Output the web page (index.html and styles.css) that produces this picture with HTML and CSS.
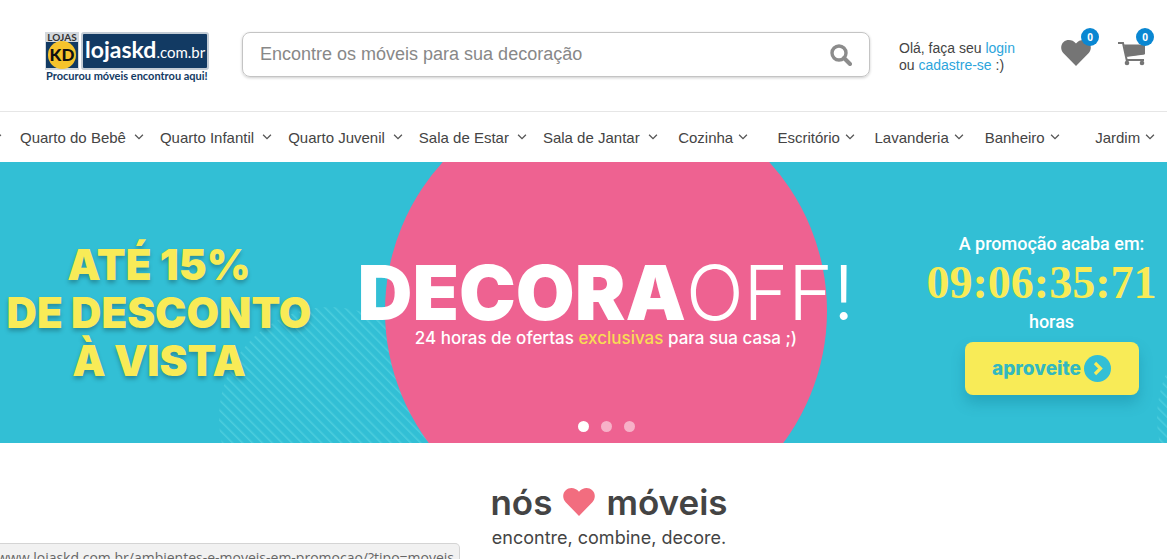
FILE: index.html
```html
<!DOCTYPE html>
<html lang="pt-BR">
<head>
<meta charset="utf-8">
<meta name="viewport" content="width=device-width, initial-scale=1">
<title>Lojas KD</title>
<link rel="stylesheet" href="styles.css">
</head>
<body>
<header class="header">
  <a class="logo" href="#" aria-label="Lojas KD">
    <svg width="164" height="52" viewBox="0 0 164 52">
      <rect width="34" height="38" fill="#d3d8dd"/>
      <rect x="1" y="10" width="32" height="26" fill="#123a63"/>
      <circle cx="17" cy="23" r="14" fill="#f6c32c"/>
      <text class="logo-lojas" x="17" y="9" text-anchor="middle">LOJAS</text>
      <text class="logo-kd" x="17" y="29" text-anchor="middle">KD</text>
      <rect x="37" y="1" width="126" height="36" rx="2" fill="#123a63" stroke="#c3ccd5" stroke-width="2"/>
      <text class="logo-name" x="40" y="26">lojaskd<tspan class="logo-domain">.com.br</tspan></text>
      <text class="logo-tag" x="1" y="48">Procurou móveis encontrou aqui!</text>
    </svg>
  </a>
  <form class="search">
    <input class="search-input" type="search" aria-label="Buscar móveis" placeholder="Encontre os móveis para sua decoração">
    <button class="search-button" type="button" aria-label="Buscar">
      <svg width="22" height="22" viewBox="0 0 22 22" fill="none" stroke="#8c8c8c"><circle cx="9" cy="9" r="7" stroke-width="3.4"/><path d="M14 14l6 6" stroke-width="4" stroke-linecap="round"/></svg>
    </button>
  </form>
  <p class="greeting">Olá, faça seu <a href="#">login</a><br>ou <a href="#">cadastre-se</a> :)</p>
  <div class="actions">
    <a class="action" href="#" aria-label="Favoritos">
      <svg width="30" height="26" viewBox="0 0 30 26"><path d="M15 26L2.5 13.2C-.8 9.5-.4 4.600 2.600 2 6-1 11.500-.6 15 3.400 18.500-.6 24-1 27.400 2 30.400 4.600 30.800 9.500 27.500 13.200Z" fill="#757575"/></svg>
      <span class="badge">0</span>
    </a>
    <a class="action" href="#" aria-label="Carrinho">
      <svg width="28" height="26" viewBox="0 0 28 26"><path d="M6 4.500H27v9.500L8 16.500Z" fill="#757575"/><path d="M0 3H5L8.700 20H26M7.600 16L26.500 13.500" fill="none" stroke="#757575" stroke-width="2"/><circle cx="9" cy="23" r="2.300" fill="#757575"/><circle cx="24" cy="23" r="2.300" fill="#757575"/></svg>
      <span class="badge">0</span>
    </a>
  </div>
</header>

<svg class="symbols" width="0" height="0"><symbol id="chevron" viewBox="0 0 9 6"><path d="M.6.8L4.500 4.700 8.400.8" fill="none" stroke="#555" stroke-width="1.300"/></symbol></svg>

<nav class="nav" aria-label="Departamentos">
  <ul class="nav-list">
    <li><a href="#" aria-label="Anterior"><svg class="chevron"><use href="#chevron"/></svg></a></li>
    <li><a href="#">Quarto do Bebê<svg class="chevron"><use href="#chevron"/></svg></a></li>
    <li><a href="#">Quarto Infantil<svg class="chevron"><use href="#chevron"/></svg></a></li>
    <li><a href="#">Quarto Juvenil<svg class="chevron"><use href="#chevron"/></svg></a></li>
    <li><a href="#">Sala de Estar<svg class="chevron"><use href="#chevron"/></svg></a></li>
    <li><a href="#">Sala de Jantar<svg class="chevron"><use href="#chevron"/></svg></a></li>
  </ul>
  <ul class="nav-list nav-even">
    <li><a href="#">Cozinha<svg class="chevron"><use href="#chevron"/></svg></a></li>
    <li><a href="#">Escritório<svg class="chevron"><use href="#chevron"/></svg></a></li>
    <li><a href="#">Lavanderia<svg class="chevron"><use href="#chevron"/></svg></a></li>
    <li><a href="#">Banheiro<svg class="chevron"><use href="#chevron"/></svg></a></li>
    <li><a href="#">Jardim<svg class="chevron"><use href="#chevron"/></svg></a></li>
  </ul>
</nav>

<main>
  <section class="hero">
    <svg class="hero-art" viewBox="0 0 1167 281" preserveAspectRatio="xMidYMid slice" aria-hidden="true">
      <defs><pattern id="stripes" width="7" height="7" patternUnits="userSpaceOnUse" patternTransform="rotate(-45)"><rect width="1.500" height="7" fill="#4ccddd"/></pattern></defs>
      <circle cx="330" cy="256" r="111" fill="url(#stripes)"/>
      <circle cx="1268" cy="256" r="111" fill="url(#stripes)"/>
      <circle cx="606" cy="149" r="221" fill="#ee6291"/>
    </svg>
    <p class="offer">ATÉ 15%<br>DE DESCONTO<br>À VISTA</p>
    <div class="campaign">
      <h1 class="campaign-title">DECORA<span class="thin">OFF!</span></h1>
      <p class="campaign-text">24 horas de ofertas <span class="highlight">exclusivas</span> para sua casa ;)</p>
    </div>
    <div class="promo">
      <p class="promo-label">A promoção acaba em:</p>
      <p class="promo-time">09:06:35:71</p>
      <p class="promo-label">horas</p>
      <button class="promo-button" type="button">aproveite
        <svg width="27" height="27" viewBox="0 0 27 27"><circle cx="13.500" cy="13.500" r="13.500" fill="#32bfd5"/><path d="M11 8l5.500 5.500L11 19" fill="none" stroke="#f8eb57" stroke-width="3.200"/></svg>
      </button>
    </div>
    <div class="dots">
      <button class="dot dot-active" type="button" aria-label="Banner 1"></button>
      <button class="dot" type="button" aria-label="Banner 2"></button>
      <button class="dot" type="button" aria-label="Banner 3"></button>
    </div>
  </section>

  <section class="intro">
    <h2 class="intro-title">nós
      <svg width="32" height="28" viewBox="0 0 30 26" preserveAspectRatio="none" aria-label="amamos"><path d="M15 26L2.500 13.200C-.8 9.500-.4 4.600 2.600 2 6-1 11.500-.6 15 3.400 18.500-.6 24-1 27.400 2 30.400 4.600 30.800 9.500 27.500 13.200Z" fill="#f26d7f"/></svg>
      móveis</h2>
    <p class="intro-text">encontre, combine, decore.</p>
  </section>
</main>
<div class="status">www.lojaskd.com.br/ambientes-e-moveis-em-promocao/?tipo=moveis</div>
</body>
</html>
```

FILE: styles.css
```css
* { box-sizing: border-box; }
body {
  margin: 0;
  min-height: 100vh;
  overflow: hidden;
  background: #fff;
  color: #444;
  font-family: "Liberation Sans", Arial, sans-serif;
}
p, h1, h2, ul { margin: 0; padding: 0; }
a { color: inherit; text-decoration: none; }
button { border: 0; padding: 0; background: none; cursor: pointer; }
svg { display: block; flex: none; }
.symbols { position: absolute; }

.header {
  display: flex;
  align-items: flex-start;
  padding: 32px 21px 34px 45px;
}
.logo { margin-right: 33px; height: 45px; }
.logo text { font-family: Lato, sans-serif; fill: #123a63; }
.logo .logo-lojas { font-size: 10px; font-weight: 700; fill: #333; }
.logo .logo-kd { font-size: 17px; font-weight: 900; fill: #111; }
.logo .logo-name { font-size: 23px; font-weight: 700; fill: #fff; }
.logo .logo-domain { font-size: 15px; font-weight: 400; }
.logo .logo-tag { font-size: 11px; font-weight: 700; }

.search {
  display: flex;
  flex: 1;
  align-items: center;
  height: 45px;
  padding: 0 17px;
  border: 1px solid #c4c4c4;
  border-radius: 8px;
  box-shadow: 0 1px 3px rgba(0, 0, 0, .2);
}
.search-input {
  flex: 1;
  min-width: 0;
  padding: 0;
  border: 0;
  outline: 0;
  background: none;
  font: 18px "Liberation Sans", Arial, sans-serif;
}
.search-input::placeholder { color: #888; opacity: 1; }

.greeting {
  width: 162px;
  margin: 8px 0 0 29px;
  font-size: 14px;
  line-height: 17px;
}
.greeting a { color: #2ca5dc; }
.actions { display: flex; gap: 27px; padding-top: 8px; }
.action { position: relative; }
.badge {
  position: absolute;
  top: -12px;
  right: -8px;
  width: 18px;
  height: 18px;
  border-radius: 50%;
  background: #0a87d2;
  color: #fff;
  font: bold 10px/18px "Open Sans", sans-serif;
  text-align: center;
}

.nav {
  display: flex;
  height: 51px;
  overflow: hidden;
  border-top: 1px solid #e6e6e6;
  font-size: 15px;
}
.nav-list { display: flex; gap: 16px; margin-left: -8px; list-style: none; }
.nav-list li { display: flex; flex: none; }
.nav-list a { display: flex; align-items: center; gap: 8px; white-space: nowrap; }
.nav-list li:first-child { margin-right: 2px; }
.chevron { width: 10px; height: 6px; }
.nav-even { flex: none; gap: 0; margin-left: 4px; }
.nav-even li, .nav-even li:first-child { width: 103px; margin: 0; justify-content: center; }
.nav-even a { gap: 5px; }

.hero {
  position: relative;
  display: grid;
  grid-template-columns: minmax(0, 318fr) minmax(0, 576fr) minmax(0, 273fr);
  height: 281px;
  overflow: hidden;
  background: #32bfd5;
  white-space: nowrap;
}
.hero-art { position: absolute; inset: 0; z-index: 0; width: 100%; height: 100%; }
.offer, .campaign, .promo { z-index: 1; text-align: center; }
.offer {
  padding-top: 79px;
  color: #f8eb57;
  font: 900 42px/48px Inter, sans-serif;
  text-shadow: 0 3px 4px rgba(0, 0, 0, .25);
}
.campaign { display: flex; flex-direction: column; align-items: center; padding-top: 98px; color: #fff; }
.campaign-title { font: 900 76px/64px Inter, sans-serif; }
.thin { font-weight: 300; }
.campaign-text { font: 500 17px/20px Inter, sans-serif; margin-top: 4px; }
.highlight { color: #f8dc55; }
.promo {
  display: flex;
  flex-direction: column;
  align-items: center;
  padding: 70px 0 0 42px;
  color: #fff;
}
.promo-label { font: 500 18px/24px Roboto, sans-serif; }
.promo-time {
  padding-right: 20px;
  color: #f8eb57;
  font: bold 46px/54px "Liberation Serif", "Times New Roman", serif;
}
.promo-button {
  display: flex;
  align-items: center;
  justify-content: center;
  gap: 3px;
  width: 174px;
  height: 53px;
  margin-top: 8px;
  border-radius: 8px;
  background: #f8eb57;
  box-shadow: 0 8px 14px rgba(0, 90, 120, .25);
  color: #32b8c0;
  font: 800 19px Inter, sans-serif;
}
.dots {
  position: absolute;
  bottom: 11px;
  left: 0;
  right: 0;
  z-index: 2;
  display: flex;
  justify-content: center;
  gap: 12px;
  padding-left: 46px;
}
.dot { width: 11px; height: 11px; border-radius: 50%; background: rgba(255, 255, 255, .5); }
.dot-active { background: #fff; }

.intro { padding: 38px 0 0 51px; text-align: center; }
.intro-title {
  display: flex;
  align-items: center;
  justify-content: center;
  gap: 11px;
  font: 600 35px/42px Inter, sans-serif;
}
.intro-text { margin-top: 5px; font: 18px/20px Inter, sans-serif; }

.status {
  position: fixed;
  bottom: -8px;
  left: 0;
  display: flex;
  justify-content: flex-end;
  width: 460px;
  height: 24px;
  padding: 3px 5px;
  overflow: hidden;
  border: 1px solid #d4d4d4;
  border-left: 0;
  border-radius: 0 5px 0 0;
  background: #f1f1f1;
  color: #666;
  font: 14px/22px "Open Sans", sans-serif;
  white-space: nowrap;
}
```
